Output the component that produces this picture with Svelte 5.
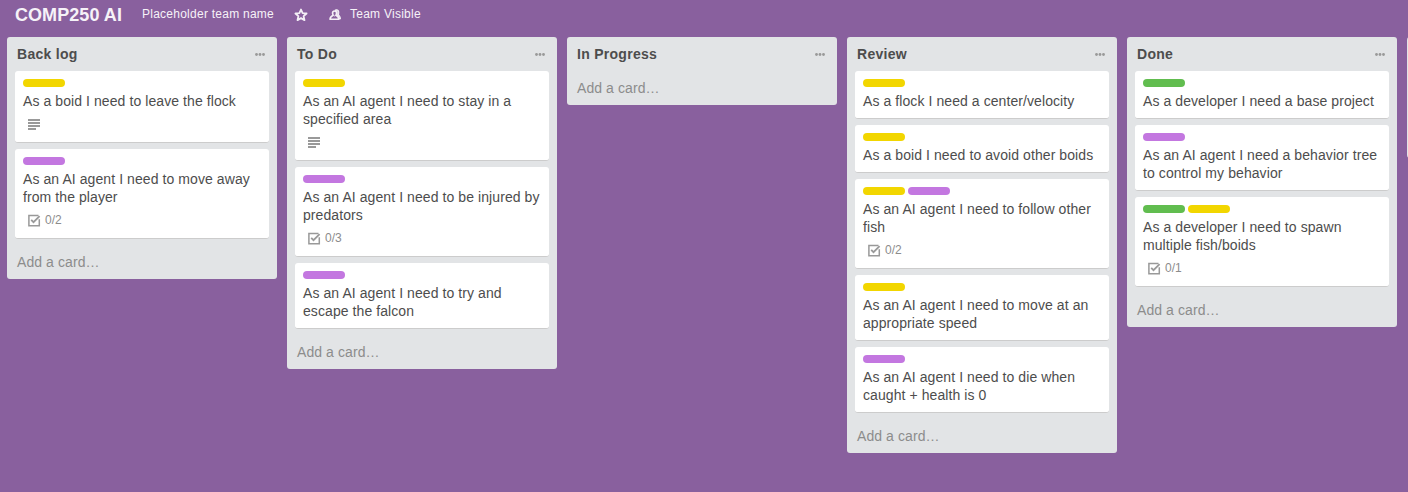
<script>
  const add = 'Add a card…';
  const lists = [
    { name: 'Back log', cards: [
      { labels: ['yellow'], text: 'As a boid I need to leave the flock', desc: true },
      { labels: ['purple'], text: 'As an AI agent I need to move away from the player', check: '0/2' }
    ] },
    { name: 'To Do', cards: [
      { labels: ['yellow'], text: 'As an AI agent I need to stay in a specified area', desc: true },
      { labels: ['purple'], text: 'As an AI agent I need to be injured by predators', check: '0/3' },
      { labels: ['purple'], text: 'As an AI agent I need to try and escape the falcon' }
    ] },
    { name: 'In Progress', cards: [] },
    { name: 'Review', cards: [
      { labels: ['yellow'], text: 'As a flock I need a center/velocity' },
      { labels: ['yellow'], text: 'As a boid I need to avoid other boids' },
      { labels: ['yellow', 'purple'], text: 'As an AI agent I need to follow other fish', check: '0/2' },
      { labels: ['yellow'], text: 'As an AI agent I need to move at an appropriate speed' },
      { labels: ['purple'], text: 'As an AI agent I need to die when caught + health is 0' }
    ] },
    { name: 'Done', cards: [
      { labels: ['green'], text: 'As a developer I need a base project' },
      { labels: ['purple'], text: 'As an AI agent I need a behavior tree to control my behavior' },
      { labels: ['green', 'yellow'], text: 'As a developer I need to spawn multiple fish/boids', check: '0/1' }
    ] }
  ];
</script>

<div class="board">
  <header>
    <h1>COMP250 AI</h1>
    <span class="team">Placeholder team name</span>
    <svg class="star" width="14" height="14" viewBox="0 0 14 14"><path d="M7 1.5 8.6 5.1 12.6 5.5 9.6 8.1 10.5 12.1 7 10.1 3.5 12.1 4.4 8.1 1.4 5.5 5.4 5.1Z" fill="none" stroke="#f4eff6" stroke-width="1.8" stroke-linejoin="round" /></svg>
    <svg class="people" width="12" height="12" viewBox="0 0 12 12">
      <path d="M6.4 1.1C8.8.2 10 1.8 9.7 4L9.5 5.8C10.7 6.8 11.4 7.8 11.4 9.6H9.8Z" fill="#d8cadf" stroke="#f4eff6" stroke-width="1.1" />
      <path d="M5.6 2C4 2 3.4 3.2 3.6 4.6L4.1 6.3C2.2 7.2 1.1 8.4 1 10.3H9.9C9.8 8.4 8.9 7.2 7 6.3L7.5 4.6C7.7 3.2 7.2 2 5.6 2Z" fill="#89609e" stroke="#f4eff6" stroke-width="1.6" stroke-linejoin="round" />
      <path d="M4.4 6.5Q5.5 7.4 6.7 6.5" fill="none" stroke="#f4eff6" />
    </svg>
    <span class="visible">Team Visible</span>
  </header>
  <main>
    {#each lists as list}
      <section>
        <div class="head">
          <h2>{list.name}</h2>
          <svg width="11" height="3" viewBox="0 0 11 3" fill="#999"><circle cx="1.5" cy="1.5" r="1.4" /><circle cx="5" cy="1.5" r="1.4" /><circle cx="8.5" cy="1.5" r="1.4" /></svg>
        </div>
        {#each list.cards as card}
          <article>
            <div class="labels">{#each card.labels as color}<i class={color}></i>{/each}</div>
            <p>{card.text}</p>
            {#if card.desc}
              <div class="badge">
                <svg width="12" height="12" viewBox="0 0 12 12" fill="#999"><path d="M0 0h12v2H0zM0 3h12v2H0zM0 6h12v2H0zM0 9h8v2H0z" /></svg>
              </div>
            {:else if card.check}
              <div class="badge check">
                <svg width="13" height="13" viewBox="0 0 13 13" fill="none" stroke="#999" stroke-width="1.5"><path d="M10.5 1.4H.9v10.3h10.4V5.2" /><path d="M3.2 5.9 5.5 8.2 11.6 2.2" stroke-width="1.8" /></svg>
                <span>{card.check}</span>
              </div>
            {/if}
          </article>
        {/each}
        <div class="add">{add}</div>
      </section>
    {/each}
    <section class="next"></section>
  </main>
</div>

<style>
  :global(body) { overflow: hidden; }
  .board { height: 492px; overflow: hidden; background: #89609e; font-family: "Liberation Sans", Arial, sans-serif; color: #4d4d4d; }
  header { display: flex; height: 37px; box-sizing: border-box; padding-left: 15px; color: #f6f2f8; white-space: nowrap; }
  h1 { margin: 0; width: 127px; font-size: 18px; line-height: 30px; font-weight: 700; letter-spacing: 0.06px; }
  .team, .visible { font-size: 12px; line-height: 28px; letter-spacing: 0.25px; }
  .team { width: 152px; }
  .star { margin-top: 8px; }
  .people { margin: 9px 9px 0 21px; }
  main { display: flex; align-items: flex-start; gap: 10px; padding-left: 7px; }
  section { flex: none; width: 270px; box-sizing: border-box; padding: 0 8px; border-radius: 3px; background: #e2e4e6; }
  .head { display: flex; justify-content: space-between; height: 34px; padding: 0 3px 0 2px; }
  h2 { margin: 0; font-size: 14px; line-height: 34px; font-weight: 700; letter-spacing: 0.28px; }
  .head svg { margin-top: 16px; }
  article { box-sizing: border-box; margin-bottom: 6px; padding: 8px; border-bottom: 1px solid #ccc; border-radius: 3px; background: #fff; }
  .labels { display: flex; gap: 3px; height: 8px; margin-bottom: 5px; }
  i { width: 42px; border-radius: 4px; }
  .yellow { background: #f2d600; }
  .purple { background: #c377e0; }
  .green { background: #61bd4f; }
  p { margin: 0; font-size: 14px; line-height: 18px; letter-spacing: 0.08px; }
  .badge { display: flex; height: 24px; padding-left: 5px; color: #8c8c8c; font-size: 12px; line-height: 28px; }
  .badge svg { margin-top: 9px; }
  .badge.check svg { margin-top: 8px; }
  .badge span { margin-left: 4px; }
  .add { padding-left: 2px; height: 34px; color: #8c8c8c; font-size: 14px; line-height: 34px; letter-spacing: 0.08px; }
  .next { height: 121px; }
</style>
